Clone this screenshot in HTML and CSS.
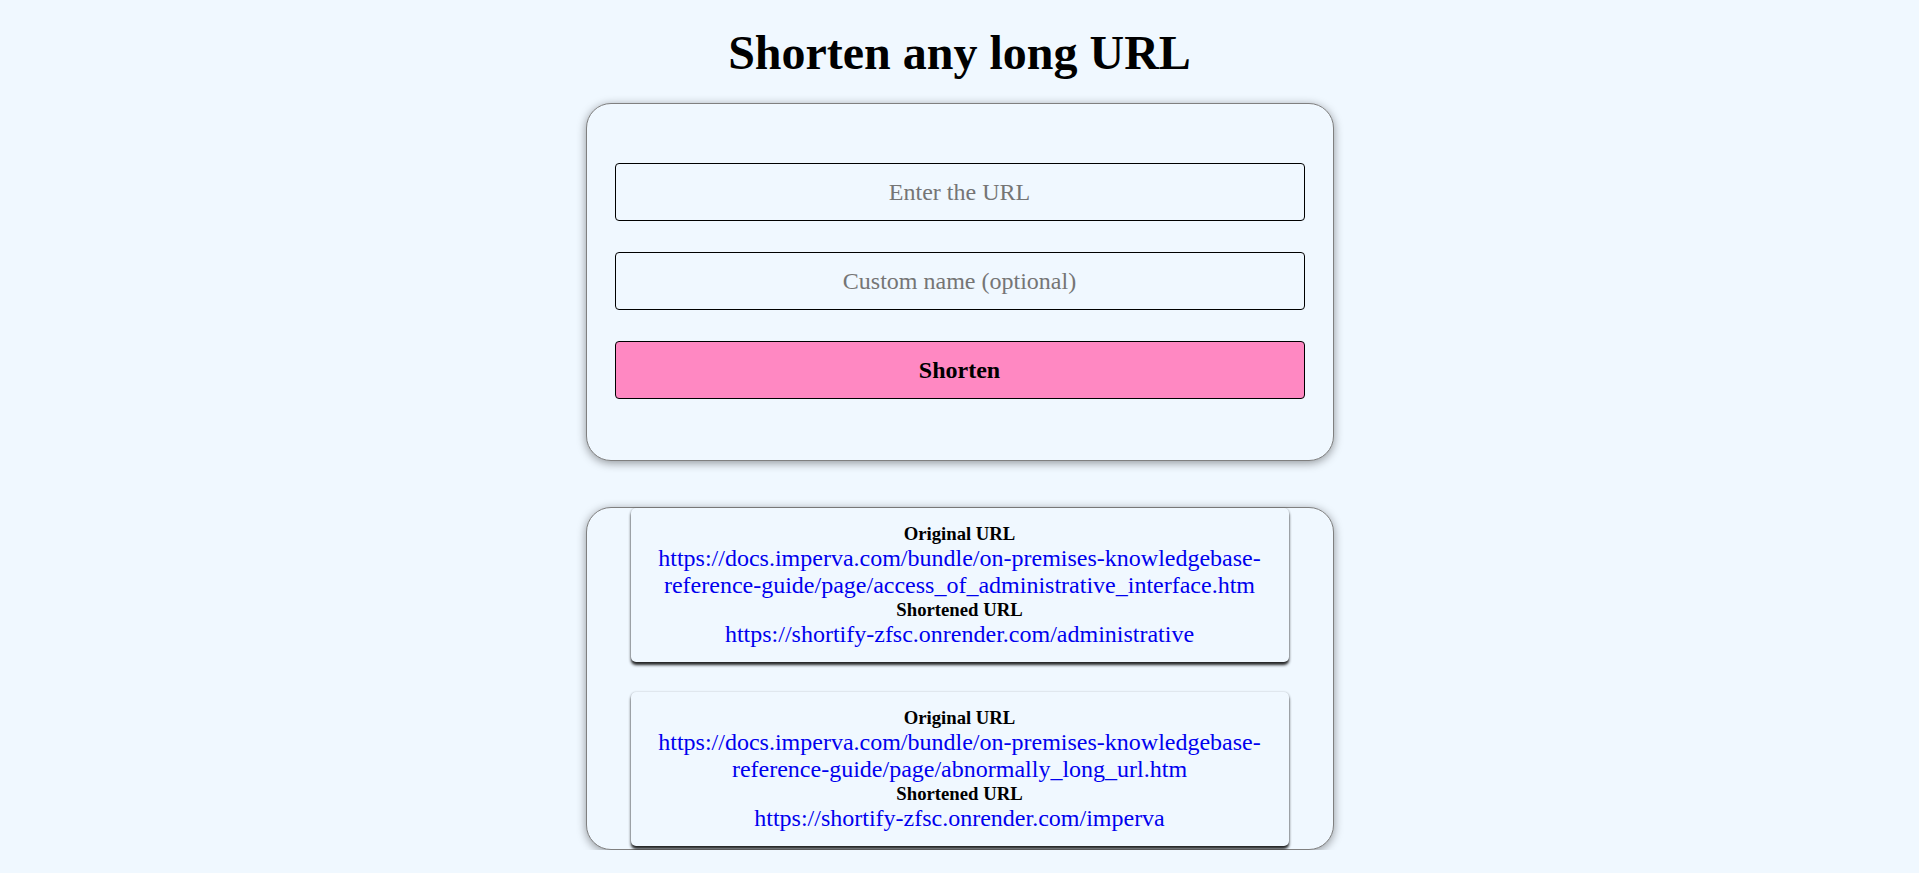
FILE: index.html
```html
<!DOCTYPE html>
<html lang="en">
<head>
<meta charset="utf-8">
<title>Shortify</title>
<link rel="stylesheet" href="styles.css">
</head>
<body>
<main class="page">
  <h1 class="title">Shorten any long URL</h1>
  <form class="card form-card">
    <input class="field" type="text" placeholder="Enter the URL">
    <input class="field" type="text" placeholder="Custom name (optional)">
    <button class="submit" type="button">Shorten</button>
  </form>
  <section class="card results-card">
    <div class="result">
      <h3 class="label">Original URL</h3>
      <a class="link" href="#">https://docs.imperva.com/bundle/on-premises-knowledgebase-reference-guide/page/access_of_administrative_interface.htm</a>
      <h3 class="label">Shortened URL</h3>
      <a class="link" href="#">https://shortify-zfsc.onrender.com/administrative</a>
    </div>
    <div class="result">
      <h3 class="label">Original URL</h3>
      <a class="link" href="#">https://docs.imperva.com/bundle/on-premises-knowledgebase-reference-guide/page/abnormally_long_url.htm</a>
      <h3 class="label">Shortened URL</h3>
      <a class="link" href="#">https://shortify-zfsc.onrender.com/imperva</a>
    </div>
  </section>
</main>
</body>
</html>
```
FILE: styles.css
```css
html, body {
  margin: 0;
  padding: 0;
  background: #f0f8ff;
  font-family: "Liberation Serif", "Times New Roman", serif;
  color: #000;
}

.page {
  display: flex;
  flex-direction: column;
  align-items: center;
  padding-top: 25px;
}

.title {
  margin: 0 0 23px;
  font-size: 48px;
  font-weight: bold;
  line-height: normal;
  text-align: center;
}

.card {
  box-sizing: border-box;
  width: 748px;
  border: 1px solid #808080;
  border-radius: 25px;
  background: #f0f8ff;
  box-shadow: 0 2px 10px rgba(0, 0, 0, 0.4);
}

.form-card {
  display: flex;
  flex-direction: column;
  gap: 31px;
  padding: 59px 28px 61px;
  margin: 0 0 46px;
}

.field,
.submit {
  box-sizing: border-box;
  width: 100%;
  height: 58px;
  margin: 0;
  border: 1px solid #000;
  border-radius: 4px;
  font-family: "Liberation Serif", "Times New Roman", serif;
  font-size: 24px;
  text-align: center;
  color: #000;
}

.field {
  background: transparent;
  padding: 0 10px;
}

.field::placeholder {
  color: #757575;
}

.submit {
  background: #ff88c2;
  font-weight: bold;
}

.results-card {
  display: flex;
  flex-direction: column;
  gap: 30px;
  padding: 0 44px 3px;
}

.result {
  display: flex;
  flex-direction: column;
  align-items: center;
  padding: 15px 15px 14px;
  border-radius: 5px;
  background: #f0f8ff;
  text-align: center;
  box-shadow: 0 3px 3px rgba(0, 0, 0, 0.85), 0 0 2px rgba(0, 0, 0, 0.25);
}

.label {
  margin: 0;
  font-size: 18.72px;
  font-weight: bold;
  line-height: normal;
}

.link {
  font-size: 24px;
  line-height: normal;
  color: #0000ee;
  text-decoration: none;
}
```
